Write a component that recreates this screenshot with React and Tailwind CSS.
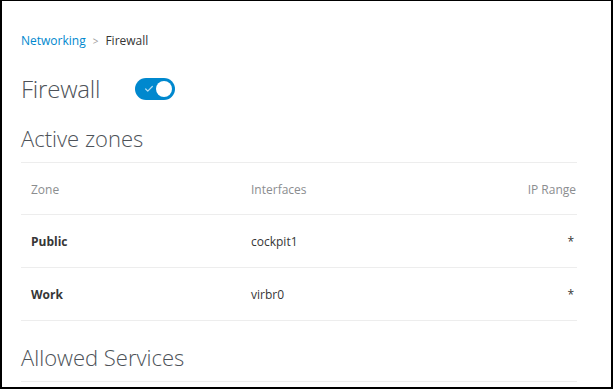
import { Check } from "lucide-react";

const zones = [
  { name: "Public", iface: "cockpit1", range: "*" },
  { name: "Work", iface: "virbr0", range: "*" },
];

const App = () => {
  return (
    <div
      className="w-[613px] h-[389px] overflow-hidden bg-white border-black border-t border-l-2 border-r-2 border-b-2"
      style={{ fontFamily: '"Open Sans", "Liberation Sans", sans-serif' }}
    >
      <div className="pl-[19px] pr-[34px] pt-[30px]">
        {/* Breadcrumb */}
        <div className="flex items-center h-[20px] text-[12px]">
          <span className="text-[#0088ce]">Networking</span>
          <span className="mx-[7px] text-[#9c9c9c] text-[10px]">&gt;</span>
          <span className="text-[#363636]">Firewall</span>
        </div>

        {/* Title + switch */}
        <div className="flex items-center mt-[21px] h-[34px]">
          <h1 className="text-[24px] font-light text-[#4d5258] leading-none tracking-[-0.2px]">Firewall</h1>
          <button className="ml-[35px] w-[40px] h-[22px] rounded-full bg-[#0088ce] flex items-center justify-between px-[3px]">
            <Check size={10} strokeWidth={3} className="text-[#b3dcf2] ml-[6px]" />
            <span className="w-[16px] h-[16px] rounded-full bg-white" />
          </button>
        </div>

        {/* Active zones */}
        <h2 className="mt-[16px] text-[22px] font-light text-[#4d5258] leading-[32px] pb-[8px] border-b border-[#ededed]">
          Active zones
        </h2>
        <div className="text-[12px]">
          <div className="flex items-center h-[52px] border-b border-[#ededed] text-[#8b8d8f]">
            <div className="w-[230px] pl-[10px] pt-[2px]">Zone</div>
            <div className="flex-1 pt-[2px]">Interfaces</div>
            <div className="pr-[1px] pt-[2px]">IP Range</div>
          </div>
          {zones.map((z) => (
            <div
              key={z.name}
              className="flex items-center h-[53px] border-b border-[#ededed] text-[#363636] pt-[2px]"
            >
              <div className="w-[230px] pl-[10px] font-bold">{z.name}</div>
              <div className="flex-1">{z.iface}</div>
              <div className="pr-[3px]">{z.range}</div>
            </div>
          ))}
        </div>

        <h2 className="mt-[20px] text-[22px] font-light text-[#4d5258] leading-[32px] pb-[8px] border-b border-[#ededed]">
          Allowed Services
        </h2>
      </div>
    </div>
  );
};

export default App;
